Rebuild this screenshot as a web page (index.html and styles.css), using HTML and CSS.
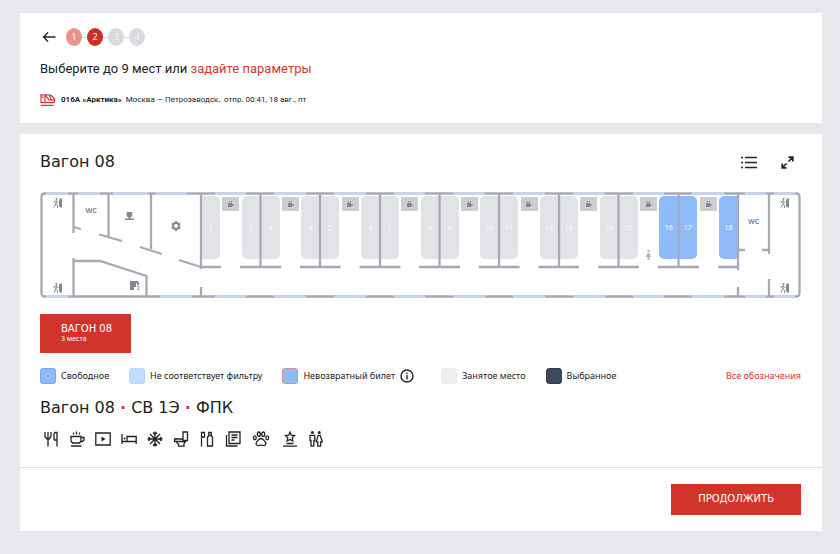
FILE: index.html
```html
<!DOCTYPE html>
<html lang="ru">
<head>
  <meta charset="UTF-8">
  <meta name="viewport" content="width=device-width, initial-scale=1">
  <title>Выбор мест</title>
  <link rel="stylesheet" href="styles.css">
</head>
<body>

  <!-- Header -->
  <header class="card trip">
    <div class="progress">
      <button class="icon-btn" type="button" aria-label="Назад">
        <svg width="14" height="12" viewBox="0 0 14 12"><path d="M13.500 6H1.500M6 1.500L1.500 6L6 10.500" /></svg>
      </button>
      <ol class="steps">
        <li class="step done">1</li>
        <li class="step current">2</li>
        <li class="step">3</li>
        <li class="step">4</li>
      </ol>
    </div>
    <p class="lead">Выберите до 9 мест или <a href="#params">задайте параметры</a></p>
    <p class="train">
      <svg class="train-icon" width="16" height="12" viewBox="0 0 16 12"><path d="M1 .8H8.500C11.500 .8 14.800 4 14.800 6.500C14.800 8 14 8.600 12.500 8.600H1ZM1 3H5V8.500M5 1L9 5.800H14.500M9.500 1.500L11 5.500M1 11.300H13.500" /></svg>
      <b>016А «Арктика»</b>
      <span>Москва — Петрозаводск,&nbsp; отпр. 00:41, 18 авг., пт</span>
    </p>
  </header>

  <main class="card">
    <div class="carriage">
      <div class="carriage-head">
        <h1>Вагон 08</h1>
        <div class="tools">
          <button class="icon-btn" type="button" aria-label="Списком">
            <svg width="16" height="13" viewBox="0 0 16 13"><path d="M4 1.500H16M4 6.500H16M4 11.500H16M0 1.500H2M0 6.500H2M0 11.500H2" /></svg>
          </button>
          <button class="icon-btn" type="button" aria-label="Развернуть">
            <svg width="13" height="13" viewBox="0 0 13 13"><path d="M7.500 1.200H11.800V5.500M11.500 1.500L7.500 5.500M1.200 7.500V11.800H5.500M1.500 11.500L5.500 7.500" /></svg>
          </button>
        </div>
      </div>

      <!-- Seat map -->
      <div class="map">
        <div class="compartments">
          <div class="compartment"><button class="seat" disabled>1</button><i class="table"></i><button class="seat" disabled>2</button></div>
          <div class="compartment"><button class="seat" disabled>3</button><i class="table"></i><button class="seat" disabled>4</button></div>
          <div class="compartment"><button class="seat" disabled>5</button><i class="table"></i><button class="seat" disabled>6</button></div>
          <div class="compartment"><button class="seat" disabled>7</button><i class="table"></i><button class="seat" disabled>8</button></div>
          <div class="compartment"><button class="seat" disabled>9</button><i class="table"></i><button class="seat" disabled>10</button></div>
          <div class="compartment"><button class="seat" disabled>11</button><i class="table"></i><button class="seat" disabled>12</button></div>
          <div class="compartment"><button class="seat" disabled>13</button><i class="table"></i><button class="seat" disabled>14</button></div>
          <div class="compartment"><button class="seat" disabled>15</button><i class="table"></i><button class="seat">16</button></div>
          <div class="compartment"><button class="seat">17</button><i class="table"></i><button class="seat">18</button></div>
        </div>

        <svg class="plan" viewBox="0 0 761 106">
          <defs>
            <g id="exit">
              <circle cx="3.500" cy="1" r="1" />
              <path class="line" d="M3.500 2.500L3 5.500L4.500 7.500V10M3 5.500L1 9.500M1 5L1.500 3.500L3.500 3L5.500 5" />
              <path d="M9 .5V9.500H7L6 8V2L7 .5Z" />
            </g>
            <g id="cup">
              <path d="M0 2H4V3H5.500V5H4V6H0ZM1 0H2V1.500H1ZM3 0H4V1.500H3Z" />
            </g>
          </defs>

          <!-- outer wall and windows -->
          <rect class="wall" x="1.500" y="1.500" width="758" height="103" rx="3" />
          <path class="window" d="M6 1.500H28M38 1.500H60M73 1.500H108M116 1.500H147M175 1.500H206M234 1.500H266M294 1.500H326M354 1.500H385M413 1.500H445M473 1.500H505M533 1.500H565M593 1.500H624M652 1.500H684M705 1.500H726M734 1.500H755" />
          <path class="window" d="M6 104.500H28M120 104.500H152M175 104.500H206M234 104.500H266M294 104.500H326M354 104.500H385M413 104.500H445M473 104.500H505M533 104.500H565M593 104.500H624M652 104.500H684M705 104.500H726M734 104.500H755" />

          <!-- service rooms -->
          <path class="wall" d="M33.500 1V41M33.500 66V105M33.500 35L41 37M68.500 1V45M59 42.500L82 49M111 1V57M100 55L122 62M161 1V77M139 68L161 75M161 95V105M33.500 69H60L106.500 84V105" />
          <path class="wall" d="M698 1V78M698 95V105M729 1V62M729 87V105M698 58H705M722 58H729" />

          <!-- compartment walls -->
          <path class="wall" d="M161 75H181M220.500 1V75M200 75H241M280 1V75M260 75H300.500M340 1V75M319.500 75H360.500M399.500 1V75M379 75H420M459 1V75M439 75H479.500M519 1V75M498.500 75H539M578.500 1V75M558 75H599M638.500 1V75M618 75H659M678 75H698" />

          <g class="glyph">
            <use href="#exit" x="13" y="6" />
            <use href="#exit" x="13" y="91" />
            <use href="#exit" x="740" y="6" />
            <use href="#exit" x="740" y="91" />
            <text x="45.500" y="21">WC</text>
            <text x="708" y="32">WC</text>
            <path d="M87 20H92C93 23 92 25 90.500 25V26.500H94V28H85V26.500H88.500V25C86.500 25 86 23 87 20Z" />
            <path d="M90 89H94V98H90ZM94 89H98L99 91V93H97V91H96V95H94ZM97.500 94H99V95.500H97.500ZM97.500 96.500H99V98H97.500Z" />
            <circle class="gear" cx="136" cy="34" r="3" />
            <path class="teeth" d="M136 29V31M136 37V39M131.700 31.500L133.400 32.500M138.600 35.500L140.300 36.500M131.700 36.500L133.400 35.500M138.600 32.500L140.300 31.500" />
            <use href="#cup" x="188" y="9" />
            <use href="#cup" x="248" y="9" />
            <use href="#cup" x="307" y="9" />
            <use href="#cup" x="367" y="9" />
            <use href="#cup" x="427" y="9" />
            <use href="#cup" x="486" y="9" />
            <use href="#cup" x="546" y="9" />
            <use href="#cup" x="606" y="9" />
            <use href="#cup" x="666" y="9" />
          </g>
          <path class="female" d="M607.500 58H609.500V60H607.500ZM607.500 61H609.500L611 65H609.500V68H607.500V65H606Z" />
        </svg>
      </div>

      <button class="tab" type="button">ВАГОН 08<small>3 места</small></button>

      <div class="legend">
        <ul>
          <li><i class="swatch free"></i>Свободное</li>
          <li><i class="swatch filtered"></i>Не соответствует фильтру</li>
          <li class="with-info">
            <i class="swatch nonrefund"></i>Невозвратный билет
            <button class="icon-btn" type="button" aria-label="О невозвратных билетах">
              <svg width="14" height="14" viewBox="0 0 14 14"><circle cx="7" cy="7" r="6" /><path d="M7 6V10.500M7 3.500V5" /></svg>
            </button>
          </li>
          <li><i class="swatch taken"></i>Занятое место</li>
          <li><i class="swatch chosen"></i>Выбранное</li>
        </ul>
        <a href="#legend">Все обозначения</a>
      </div>

      <h2>Вагон 08 <span class="dot">·</span> СВ 1Э <span class="dot">·</span> ФПК</h2>

      <!-- Services -->
      <div class="services">
        <svg width="16" height="16" viewBox="0 0 16 16"><path d="M2 1V5.500L4 8H6L8 5.500V1M5 1V15.500M11 9V3L12 1.500H14V15.500M11 9H14" /></svg>
        <svg width="16" height="16" viewBox="0 0 16 16"><path d="M2 5.500H12V10L10.500 12H3.500L2 10ZM12 6.500H15V9L13.500 10.500H12M2 15H12.500M4.500 1.500V3.500M7.500 .5V3.500M10.500 1.500V3.500" /></svg>
        <svg width="16" height="16" viewBox="0 0 16 16"><path d="M.8 2H15.200V14H.8Z" /><path class="solid" d="M6.500 5.500L10.500 8L6.500 10.500Z" /></svg>
        <svg width="16" height="16" viewBox="0 0 16 16"><path d="M1 3V13M1 10.500H15.200V5.500H6V10.500M15.200 10V13" /><circle class="solid" cx="3.500" cy="7.500" r="1" /></svg>
        <svg width="16" height="16" viewBox="0 0 16 16"><path d="M8 .5V15.500M.5 8H15.500M3 3L13 13M13 3L3 13M6 1.500L8 3.500L10 1.500M6 14.500L8 12.500L10 14.500M1.500 6L3.500 8L1.500 10M14.500 6L12.500 8L14.500 10" /></svg>
        <svg width="16" height="16" viewBox="0 0 16 16"><path d="M10 1H14.500V9.500H10ZM1 8H10M1.500 8V10.500H12.500V9.500M4 10.500V12L5.500 13V15.200H11V12.500L12.500 10.500" /></svg>
        <svg width="16" height="16" viewBox="0 0 16 16"><path d="M2.500 15.500V1.500H5.500V6H2.500M8.500 15V6L10 4.500H12L13.500 6V15ZM9.800 4.500V1.500H12.200V4.500" /></svg>
        <svg width="16" height="16" viewBox="0 0 16 16"><path d="M4 1H15V12.500H4ZM1.500 4V15H12.500M6.500 4H12.500M6.500 6.500H12.500M6.500 9H9.500" /></svg>
        <svg width="20" height="16" viewBox="0 0 20 16"><path d="M10 7.500C12 7.500 12.500 9 14 10.500C16 13 14.500 14.800 12.500 14.500C11 14 9 14 7.500 14.500C5.500 14.800 4 13 6 10.500C7.500 9 8 7.500 10 7.500Z" /><ellipse cx="7.800" cy="3.200" rx="1.500" ry="2.200" /><ellipse cx="12.200" cy="3.200" rx="1.500" ry="2.200" /><ellipse cx="3.800" cy="6.800" rx="1.400" ry="2" /><ellipse cx="16.200" cy="6.800" rx="1.400" ry="2" /></svg>
        <svg width="18" height="16" viewBox="0 0 18 16"><path d="M9 1L10.300 4.200L13.500 4.500L11.200 6.800L11.800 10L9 8.500L6.200 10L6.800 6.800L4.500 4.500L7.700 4.200ZM5.500 12.500H12.500M2 15.200H16" /></svg>
        <svg width="14" height="16" viewBox="0 0 14 16"><path d="M1 4.300H5.800V9.500H4.800V15.200H2V9.500H1ZM9.200 4.300H11.200L13.300 10.800H11.600V15.200H8.800V10.800H7.200Z" /><circle class="solid" cx="3.400" cy="1.500" r="1.500" /><circle class="solid" cx="10.200" cy="1.500" r="1.500" /></svg>
      </div>
    </div>

    <footer class="actions">
      <button class="submit" type="button">ПРОДОЛЖИТЬ</button>
    </footer>
  </main>

</body>
</html>
```
FILE: styles.css
```css
* {
  box-sizing: border-box;
}
body {
  margin: 0;
  padding: 13px 18px 23px 20px;
  background: #e8e9ed;
  color: #222326;
  font: 9px/12px "Noto Sans", sans-serif;
}
h1, h2, p, ol, ul {
  margin: 0;
  padding: 0;
  font-weight: normal;
}
ol, ul {
  list-style: none;
}
a {
  color: #cf3a31;
  text-decoration: none;
}
button {
  padding: 0;
  border: none;
  font: inherit;
  cursor: pointer;
}
svg {
  display: block;
  flex: none;
  fill: none;
  stroke: #222326;
  stroke-width: 1.4;
}
.card {
  background: #fff;
}
.icon-btn {
  background: none;
}

/* header */
.trip {
  margin-bottom: 11px;
  padding: 15px 20px 17px;
}
.progress {
  display: flex;
  align-items: center;
  gap: 10px;
  padding-left: 2px;
}
.steps {
  display: flex;
  gap: 5px;
  background: linear-gradient(#d9dade, #d9dade) center / 100% 1px no-repeat;
}
.step {
  width: 16px;
  height: 18px;
  border-radius: 50%;
  background: #d9dade;
  color: #f2f2f4;
  line-height: 18px;
  text-align: center;
}
.step.done {
  background: #e8938e;
}
.step.current {
  background: #cc3028;
}
.lead {
  margin-top: 13px;
  font: 13px/20px Roboto, sans-serif;
}
.train {
  display: flex;
  align-items: center;
  gap: 4px;
  margin-top: 15px;
  font: 8px/12px Roboto, sans-serif;
}
.train-icon {
  margin-right: 1px;
  stroke: #cf3a31;
  stroke-width: 1.2;
}

/* carriage */
.carriage {
  padding: 18px 21px 20px 20px;
}
.carriage-head {
  display: flex;
  justify-content: space-between;
  align-items: center;
}
h1, h2 {
  font: 16px/20px "DejaVu Sans", sans-serif;
}
.tools {
  display: flex;
  gap: 24px;
  padding-right: 7px;
}
.tools svg {
  stroke-width: 1.7;
}

/* the map keeps its shape, seats lie in the middle cell */
.map {
  display: grid;
  grid-template-columns: 161fr 537fr 63fr;
  grid-template-rows: 4fr 63fr 39fr;
  aspect-ratio: 761 / 106;
  margin-top: 20px;
}
.compartments {
  display: grid;
  grid-template-columns: repeat(9, 1fr);
  grid-area: 2 / 2;
}
.compartment {
  display: flex;
  justify-content: space-between;
}
.seat {
  width: 32%;
  background: #8fbbf8;
  border-radius: 0 5px 5px 0;
  color: #fff;
  font-size: 7px;
}
.seat:last-child {
  border-radius: 5px 0 0 5px;
}
.seat:disabled {
  background: #e2e3e7;
  color: #f7f7f9;
  cursor: default;
}
.table {
  width: 29%;
  height: 22%;
  margin-top: 1px;
  background: #cdced4;
}
.plan {
  grid-area: 1 / 1 / -1 / -1;
  width: 100%;
  height: 100%;
  pointer-events: none;
}
.wall {
  stroke: #a7aab4;
  stroke-width: 2.3;
}
.window {
  stroke: #c9d7f0;
  stroke-width: 2.3;
}
.glyph {
  fill: #858893;
  stroke: none;
  font-size: 7px;
  font-weight: bold;
}
.line {
  fill: none;
  stroke: #858893;
  stroke-width: 1;
}
.gear, .teeth {
  fill: none;
  stroke: #858893;
  stroke-width: 2;
}
.female {
  fill: #c9a6d2;
  stroke: none;
}

.tab {
  display: block;
  margin-top: 16px;
  padding: 9px 19px 10px 21px;
  background: #d0342b;
  color: #fff;
  font: 10px/12px "DejaVu Sans", sans-serif;
  text-align: left;
}
.tab small {
  display: block;
  font: 7px/8px "Noto Sans", sans-serif;
}

/* legend */
.legend {
  display: flex;
  justify-content: space-between;
  align-items: center;
  margin-top: 15px;
}
.legend ul {
  display: flex;
  flex-wrap: wrap;
  gap: 20px;
}
.legend li {
  display: flex;
  align-items: center;
  gap: 5px;
}
.legend .with-info {
  margin-right: 7px;
}
.swatch {
  width: 16px;
  height: 16px;
  border: 1px solid;
  border-radius: 3px;
}
.free {
  background: #8fbbf8;
  border-color: #76a5e8;
}
.filtered {
  background: #c0dcfa;
  border-color: #b4d5f8;
}
.nonrefund {
  background: #8fbbf8;
  border-color: #d58f9f;
}
.taken {
  background: #eceff0;
  border-color: #e8ebec;
}
.chosen {
  background: #3d4a5b;
  border-color: #333f4f;
}
h2 {
  margin-top: 14px;
}
.dot {
  color: #cf3a31;
  font-weight: bold;
}
.services {
  display: flex;
  flex-wrap: wrap;
  gap: 10px;
  margin-top: 13px;
  padding-left: 3px;
}
.services svg {
  stroke-width: 1.3;
}
.services .solid {
  fill: #222326;
  stroke: none;
}

/* footer */
.actions {
  display: flex;
  justify-content: flex-end;
  padding: 16px 21px;
  border-top: 1px solid #dfe0e4;
}
.submit {
  padding: 9px 27px 10px;
  background: #d0342b;
  color: #fff;
  font: 10px/12px "DejaVu Sans", sans-serif;
}
```
